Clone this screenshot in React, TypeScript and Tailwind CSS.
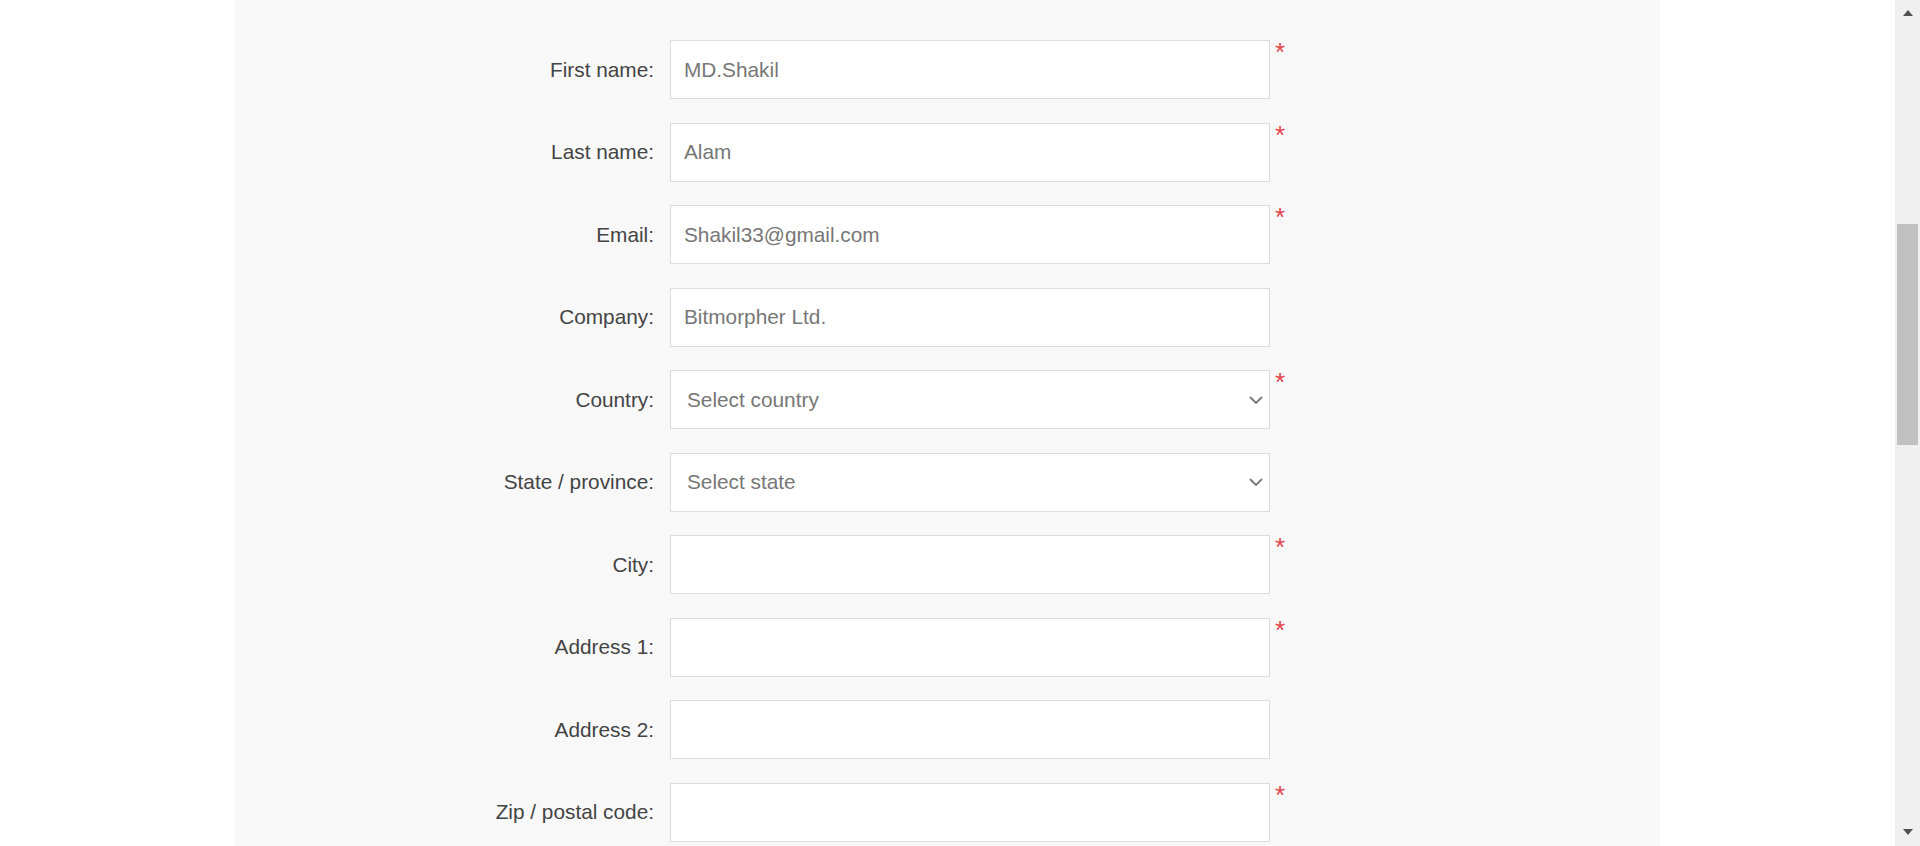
import React from "react";

interface Field {
  label: string;
  value?: string;
  placeholder?: string;
  select?: boolean;
  required?: boolean;
}

const fields: Field[] = [
  { label: "First name:", value: "MD.Shakil", required: true },
  { label: "Last name:", value: "Alam", required: true },
  { label: "Email:", value: "Shakil33@gmail.com", required: true },
  { label: "Company:", value: "Bitmorpher Ltd." },
  { label: "Country:", placeholder: "Select country", select: true, required: true },
  { label: "State / province:", placeholder: "Select state", select: true },
  { label: "City:", value: "", required: true },
  { label: "Address 1:", value: "", required: true },
  { label: "Address 2:", value: "" },
  { label: "Zip / postal code:", value: "", required: true },
];

const Chevron = () => (
  <svg
    className="pointer-events-none absolute right-[7px] top-1/2 -translate-y-1/2"
    width="14"
    height="8"
    viewBox="0 0 14 8"
    fill="none"
  >
    <path d="M1 1l6 6 6-6" stroke="#777" strokeWidth="1.8" />
  </svg>
);

const Row: React.FC<{ field: Field }> = ({ field }) => (
  <div className="flex items-start">
    <label className="w-[435px] h-[59px] pr-4 flex items-center justify-end text-[#444]">
      {field.label}
    </label>
    {field.select ? (
      <div className="relative w-[600px] h-[59px]">
        <select
          defaultValue=""
          className="w-full h-full appearance-none bg-white border border-[#dcdcdc] pl-4 pr-8 text-[#777] outline-none"
        >
          <option value="" disabled>
            {field.placeholder}
          </option>
        </select>
        <Chevron />
      </div>
    ) : (
      <input
        type="text"
        defaultValue={field.value}
        className="w-[600px] h-[59px] bg-white border border-[#dcdcdc] pl-[13px] text-[#777] outline-none"
      />
    )}
    {field.required && (
      <span className="ml-[5px] -mt-[1px] text-[26px] leading-none text-[#e4434b]">*</span>
    )}
  </div>
);

export default function App() {
  return (
    <div
      className="flex h-[846px] w-[1920px] overflow-hidden bg-white text-[20.8px]"
      style={{ fontFamily: '"Liberation Sans", Arial, sans-serif' }}
    >
      <div className="w-[235px]" />
      <div className="w-[1425px] bg-[#f8f8f8] pt-[40px] flex flex-col gap-[23.5px]">
        {fields.map((f) => (
          <Row key={f.label} field={f} />
        ))}
      </div>
      <div className="w-[235px]" />
      <div className="w-[25px] bg-[#f0f0f0] flex flex-col items-center">
        <div className="mt-[10px] w-0 h-0 border-l-[5.5px] border-r-[5.5px] border-b-[6px] border-l-transparent border-r-transparent border-b-[#505050]" />
        <div className="mt-[208px] w-[21px] h-[221px] bg-[#c1c1c1]" />
        <div className="flex-1" />
        <div className="mb-[11px] w-0 h-0 border-l-[5.5px] border-r-[5.5px] border-t-[6px] border-l-transparent border-r-transparent border-t-[#505050]" />
      </div>
    </div>
  );
}
